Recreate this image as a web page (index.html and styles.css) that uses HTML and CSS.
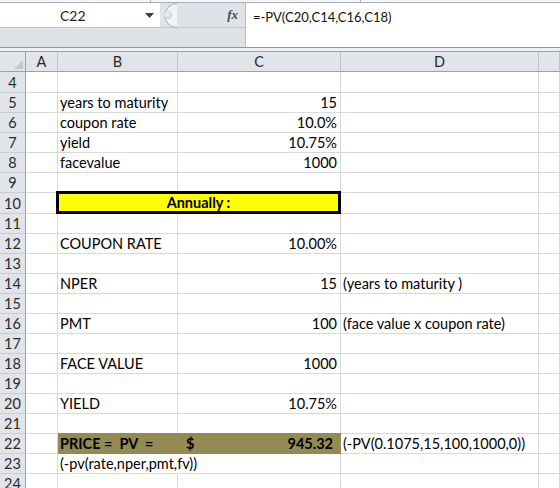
FILE: index.html
```html
<!DOCTYPE html>
<html lang="en">
<head>
    <meta charset="UTF-8">
    <title>Bond Price - PV</title>
    <link rel="stylesheet" href="styles.css">
</head>
<body>

    <div class="top-edge">
        <div class="edge-a"></div>
        <div class="edge-b"></div>
    </div>

    <div class="formula-bar">
        <div class="left-tools">
            <div class="name-box">
                <span class="cell-ref">C22</span>
                <svg class="drop" width="9" height="5" viewBox="0 0 9 5"><polygon points="0,0 9,0 4.5,5" fill="#3c3c3c"/></svg>
            </div>
            <div class="tool-strip">
                <svg class="knob" width="18" height="25" viewBox="0 0 18 25">
                    <defs>
                        <radialGradient id="kg" cx="0.45" cy="0.4" r="0.6">
                            <stop offset="0" stop-color="#f4f5f7"/>
                            <stop offset="1" stop-color="#c9ced6"/>
                        </radialGradient>
                    </defs>
                    <path d="M18,0.5 A12,12 0 0 0 18,24.5" fill="#f2f3f5" stroke="#a7adb6"/>
                    <circle cx="9" cy="12" r="4" fill="url(#kg)"/>
                </svg>
                <span class="fx">fx</span>
            </div>
        </div>
        <div class="formula-input">=-PV(C20,C14,C16,C18)</div>
    </div>

    <div class="sep"></div>

    <div class="sheet">
        <div class="row head">
            <div class="corner">
                <svg width="9" height="9" viewBox="0 0 9 9"><polygon points="9,0 9,9 0,9" fill="#c5c9cf"/></svg>
            </div>
            <div class="ch">A</div>
            <div class="ch">B</div>
            <div class="ch">C</div>
            <div class="ch">D</div>
            <div class="ch"></div>
        </div>

        <div class="row tall">
            <div class="rh">4</div><div class="c"></div><div class="c"></div><div class="c"></div><div class="c"></div><div class="c"></div>
        </div>
        <div class="row">
            <div class="rh">5</div><div class="c"></div><div class="c">years to maturity</div><div class="c num">15</div><div class="c"></div><div class="c"></div>
        </div>
        <div class="row">
            <div class="rh">6</div><div class="c"></div><div class="c">coupon rate</div><div class="c num">10.0%</div><div class="c"></div><div class="c"></div>
        </div>
        <div class="row">
            <div class="rh">7</div><div class="c"></div><div class="c">yield</div><div class="c num">10.75%</div><div class="c"></div><div class="c"></div>
        </div>
        <div class="row">
            <div class="rh">8</div><div class="c"></div><div class="c">facevalue</div><div class="c num">1000</div><div class="c"></div><div class="c"></div>
        </div>
        <div class="row">
            <div class="rh">9</div><div class="c"></div><div class="c"></div><div class="c"></div><div class="c"></div><div class="c"></div>
        </div>
        <div class="row tall">
            <div class="rh">10</div><div class="c"></div><div class="c annual">Annually :</div><div class="c"></div><div class="c"></div>
        </div>
        <div class="row">
            <div class="rh">11</div><div class="c"></div><div class="c"></div><div class="c"></div><div class="c"></div><div class="c"></div>
        </div>
        <div class="row">
            <div class="rh">12</div><div class="c"></div><div class="c">COUPON RATE</div><div class="c num">10.00%</div><div class="c"></div><div class="c"></div>
        </div>
        <div class="row">
            <div class="rh">13</div><div class="c"></div><div class="c"></div><div class="c"></div><div class="c"></div><div class="c"></div>
        </div>
        <div class="row">
            <div class="rh">14</div><div class="c"></div><div class="c">NPER</div><div class="c num">15</div><div class="c note">(years to maturity )</div><div class="c"></div>
        </div>
        <div class="row">
            <div class="rh">15</div><div class="c"></div><div class="c"></div><div class="c"></div><div class="c"></div><div class="c"></div>
        </div>
        <div class="row">
            <div class="rh">16</div><div class="c"></div><div class="c">PMT</div><div class="c num">100</div><div class="c note">(face value x coupon rate)</div><div class="c"></div>
        </div>
        <div class="row">
            <div class="rh">17</div><div class="c"></div><div class="c"></div><div class="c"></div><div class="c"></div><div class="c"></div>
        </div>
        <div class="row">
            <div class="rh">18</div><div class="c"></div><div class="c">FACE VALUE</div><div class="c num">1000</div><div class="c"></div><div class="c"></div>
        </div>
        <div class="row">
            <div class="rh">19</div><div class="c"></div><div class="c"></div><div class="c"></div><div class="c"></div><div class="c"></div>
        </div>
        <div class="row">
            <div class="rh">20</div><div class="c"></div><div class="c">YIELD</div><div class="c num">10.75%</div><div class="c"></div><div class="c"></div>
        </div>
        <div class="row">
            <div class="rh">21</div><div class="c"></div><div class="c"></div><div class="c"></div><div class="c"></div><div class="c"></div>
        </div>
        <div class="row">
            <div class="rh">22</div><div class="c"></div>
            <div class="c price">PRICE =&nbsp; PV&nbsp; =</div>
            <div class="c price money"><span>$</span><span>945.32</span></div>
            <div class="c note">(-PV(0.1075,15,100,1000,0))</div><div class="c"></div>
        </div>
        <div class="row">
            <div class="rh">23</div><div class="c"></div><div class="c spill">(-pv(rate,nper,pmt,fv))</div><div class="c"></div><div class="c"></div><div class="c"></div>
        </div>
        <div class="row">
            <div class="rh">24</div><div class="c"></div><div class="c"></div><div class="c"></div><div class="c"></div><div class="c"></div>
        </div>
    </div>

</body>
</html>
```

FILE: styles.css
```css
body {
    margin: 0;
    width: 560px;
    height: 488px;
    overflow: hidden;
    background: #ffffff;
    font-family: 'Lato', 'Liberation Sans', sans-serif;
    font-size: 14.5px;
    color: #000;
}

/* ribbon remnant at the very top */
.top-edge {
    display: flex;
    height: 2px;
    border-bottom: 1px solid #a9b0ba;
    background: #f5f6f8;
}

.edge-a {
    width: 150px;
    border-right: 1px solid #a9b0ba;
}

.edge-b {
    width: 209px;
    border-right: 1px solid #a9b0ba;
}

/* formula bar */
.formula-bar {
    display: flex;
    height: 44px;
    border-bottom: 1px solid #8e969f;
}

.left-tools {
    display: flex;
    align-items: flex-start;
    width: 245px;
    background: #dfe3e8;
}

.name-box {
    display: flex;
    align-items: center;
    width: 160px;
    height: 24px;
    background: #fff;
    border-bottom: 1px solid #c3c8cf;
    font-family: 'Lato', 'Liberation Sans', sans-serif;
    font-size: 14px;
    color: #1e1e1e;
}

.cell-ref {
    flex: 1;
    padding-left: 60px;
}

.drop {
    margin-right: 6px;
}

.tool-strip {
    display: flex;
    align-items: center;
    flex: 1;
    height: 24px;
    border-bottom: 1px solid #c3c8cf;
}

.knob {
    margin-left: -1px;
}

.fx {
    margin-left: auto;
    margin-right: 7px;
    font-family: 'Liberation Serif', serif;
    font-style: italic;
    font-weight: bold;
    font-size: 13px;
    color: #4a4a4a;
}

.formula-input {
    flex: 1;
    background: #fff;
    border-left: 1px solid #b9bec6;
    padding: 6px 0 0 7px;
    font-size: 13px;
    color: #111;
}

.sep {
    height: 3px;
    background: #eef0f3;
    border-bottom: 1px solid #9aa2ac;
}

/* sheet grid */
.sheet {
    --cols: 26px 32px 120px 163px 198px 1fr;
}

.row {
    display: grid;
    grid-template-columns: var(--cols);
    height: 20px;
}

.row.tall {
    height: 21px;
}

.row > div {
    box-sizing: border-box;
    display: flex;
    align-items: flex-end;
    white-space: nowrap;
    border-right: 1px solid #d9d9d9;
    border-bottom: 1px solid #d9d9d9;
}

.row.head > div {
    align-items: center;
    justify-content: center;
    background: #e1e4e9;
    border-right: 1px solid #bcc3cc;
    border-bottom: 1px solid #9aa2ac;
    color: #2b2b2b;
}

.row.head > .corner {
    align-items: flex-end;
    justify-content: flex-end;
    padding: 0 2px 2px 0;
    border-right-color: #9aa2ac;
}

.row > .rh {
    justify-content: center;
    align-items: center;
    background: #e1e4e9;
    border-right: 1px solid #9aa2ac;
    border-bottom: 1px solid #c8cdd4;
    color: #2b2b2b;
}

.c {
    padding: 0 2px 1px;
}

.num {
    justify-content: flex-end;
    padding-right: 3px;
}

.row > .annual {
    grid-column: span 2;
    justify-content: center;
    margin: -2px 0 0 -2px;
    border: 3px solid #000;
    background: #ffff00;
    font-weight: bold;
    padding-bottom: 0;
}

.row > .price {
    background: #948a54;
    border-color: #948a54;
    font-weight: bold;
    margin-top: -1px;
}

.money {
    justify-content: space-between;
    padding: 0 7px 1px 8px;
}

.row > .spill {
    border-right-color: transparent;
    overflow: visible;
}
```
